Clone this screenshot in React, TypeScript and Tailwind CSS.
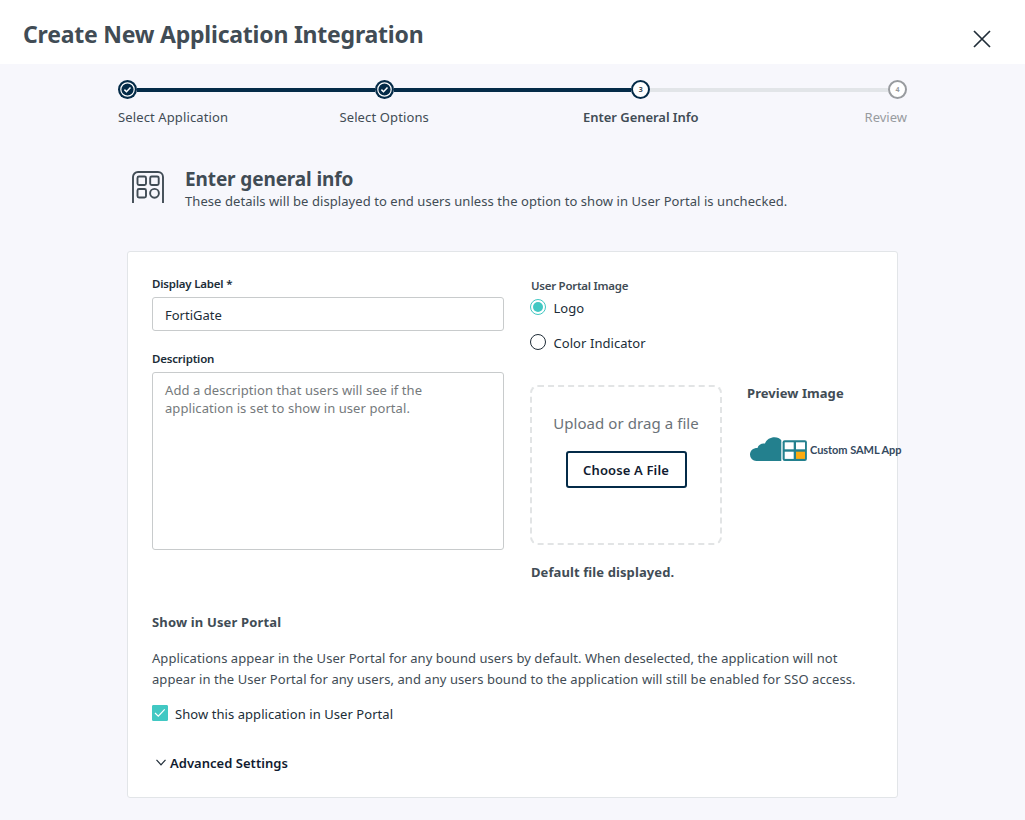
import { useState } from "react";

type StepState = "done" | "current" | "upcoming";

const steps: { label: string; state: StepState; align: string; text: string }[] = [
  {
    label: "Select Application",
    state: "done",
    align: "items-start",
    text: "tracking-[0.12px] text-[#414c55]",
  },
  {
    label: "Select Options",
    state: "done",
    align: "items-center",
    text: "tracking-[0.12px] text-[#414c55]",
  },
  {
    label: "Enter General Info",
    state: "current",
    align: "items-center",
    text: "font-semibold tracking-[-0.05px] text-[#414c55]",
  },
  { label: "Review", state: "upcoming", align: "items-end", text: "text-[#989b9f]" },
];

function StepCircle({ state, number }: { state: StepState; number: number }) {
  if (state === "done") {
    return (
      <svg width="19" height="19" viewBox="0 0 19 19" fill="none" className="shrink-0">
        <circle cx="9.5" cy="9.5" r="9.5" fill="#042b48" />
        <circle cx="9.5" cy="9.5" r="6.7" stroke="#fff" strokeWidth="1.2" />
        <path d="M6.4 9.6l2.1 2.1 4-4.3" stroke="#fff" strokeWidth="1.5" />
      </svg>
    );
  }
  return (
    <span
      className={`flex h-[19px] w-[19px] shrink-0 items-center justify-center rounded-full border-2 bg-white text-[7px] leading-none font-bold ${
        state === "current"
          ? "border-[#042b48] text-[#414c55]"
          : "border-[#989b9f] text-[#989b9f]"
      }`}
    >
      {number}
    </span>
  );
}

function Stepper() {
  return (
    <div className="ml-[118px] flex w-[789px] pt-4">
      {steps.map((step, index) => (
        <div key={step.label} className={index > 0 ? "flex flex-1" : "flex"}>
          {index > 0 && (
            <div
              className={`mt-2 h-1 flex-1 ${
                step.state === "upcoming" ? "bg-[#e2e5e8]" : "bg-[#042b48]"
              }`}
            />
          )}
          <div className={`flex w-[19px] flex-col ${step.align}`}>
            <StepCircle state={step.state} number={index + 1} />
            <span className={`mt-2 text-[13px] leading-5 whitespace-nowrap ${step.text}`}>
              {step.label}
            </span>
          </div>
        </div>
      ))}
    </div>
  );
}

function AppsIcon() {
  return (
    <svg
      width="34"
      height="34"
      viewBox="0 0 34 34"
      fill="none"
      stroke="#414c55"
      strokeWidth="1.9"
      className="shrink-0"
    >
      <path d="M2 32V6A5 5 0 0 1 7 1h20A5 5 0 0 1 32 6V32" />
      <rect x="6.5" y="5.5" width="8.5" height="8.5" rx="1.5" />
      <rect x="19.2" y="5.5" width="8.5" height="8.5" rx="1.5" />
      <rect x="6.5" y="18" width="8.5" height="8.5" rx="1.5" />
      <circle cx="23.5" cy="22.3" r="4.4" />
    </svg>
  );
}

function PreviewLogo() {
  return (
    <div className="flex w-40 items-center">
      <svg width="58" height="26" viewBox="0 0 58 26" className="shrink-0">
        <path
          d="M31.300 25H6.500A6.300 6.300 0 0 1 0 18.700C0 14.700 3 12 7.500 12C8.500 8.500 11.500 7 15 7.500C16.500 3.500 20.500 1.300 24.500 1.300C27.500 1.300 29.800 2.500 31.300 4.200Z"
          fill="#23808e"
        />
        <rect x="32.600" y="4.200" width="24.300" height="20.800" rx="2" fill="#23808e" />
        <rect x="34.700" y="6.300" width="9" height="7" fill="#fff" />
        <rect x="46" y="6.300" width="9" height="7" fill="#fff" />
        <rect x="34.700" y="15.700" width="9" height="7.200" fill="#fff" />
        <rect x="46" y="15.700" width="9" height="7.200" fill="#fbab10" />
      </svg>
      <span className="mt-px ml-[2px] font-[Lato] text-[11px] leading-4 font-bold tracking-[-0.05px] whitespace-nowrap text-[#34495e]">
        Custom SAML App
      </span>
    </div>
  );
}

function Radio({
  label,
  checked,
  onChange,
}: {
  label: string;
  checked: boolean;
  onChange: () => void;
}) {
  return (
    <button
      type="button"
      role="radio"
      aria-checked={checked}
      onClick={onChange}
      className="flex h-[18px] items-start"
    >
      <span
        className={`flex h-4 w-4 items-center justify-center rounded-full border ${
          checked ? "border-[#41c8c3]" : "border-[#202d38]"
        }`}
      >
        {checked && <span className="h-2.5 w-2.5 rounded-full bg-[#41c8c3]" />}
      </span>
      <span className="ml-[7.5px] text-[13px] leading-[18px] tracking-[0.06px] text-[#202d38]">
        {label}
      </span>
    </button>
  );
}

function App() {
  const [label, setLabel] = useState<string>("FortiGate");
  const [description, setDescription] = useState<string>("");
  const [image, setImage] = useState<"logo" | "color">("logo");
  const [visible, setVisible] = useState<boolean>(true);

  return (
    <div className="h-[820px] w-[1025px] overflow-hidden bg-[#f7f7fc] font-['Noto_Sans',sans-serif] text-[#414c55]">
      <header className="flex h-16 items-start justify-between bg-white pr-[34px] pl-[23px]">
        <h1 className="mt-[18px] text-[23px] leading-8 font-bold tracking-[-0.22px]">
          Create New Application Integration
        </h1>
        <button type="button" aria-label="Close" className="mt-[30px]">
          <svg width="18" height="18" viewBox="0 0 18 18" stroke="#202d38" strokeWidth="1.7">
            <path d="M1 1l16 16M17 1L1 17" />
          </svg>
        </button>
      </header>

      <Stepper />

      <div className="mt-11 ml-[131px] flex">
        <AppsIcon />
        <div className="ml-5">
          <h2 className="-mt-1 text-[19px] leading-6 font-bold tracking-[-0.12px]">
            Enter general info
          </h2>
          <p className="text-[13px] leading-5 tracking-[0.065px]">
            These details will be displayed to end users unless the option to show in User Portal is
            unchecked.
          </p>
        </div>
      </div>

      <main className="mt-10 ml-[127px] h-[547px] w-[771px] rounded-[3px] border border-[#e2e5e8] bg-white px-6">
        <div className="flex">
          <div className="w-[352px] shrink-0 pt-[23px]">
            <label className="block text-[11.5px] leading-[18px] font-semibold tracking-[-0.2px] text-[#202d38]">
              Display Label *
            </label>
            <input
              value={label}
              onChange={(e) => setLabel(e.target.value)}
              className="mt-1 block h-[34px] w-full rounded-[3px] border border-[#c8cbcc] px-3 pt-0.5 text-[13px] text-[#202d38] outline-none"
            />
            <label className="mt-[19px] block text-[11.5px] leading-[18px] font-semibold tracking-[-0.2px] text-[#202d38]">
              Description
            </label>
            <textarea
              value={description}
              onChange={(e) => setDescription(e.target.value)}
              placeholder="Add a description that users will see if the application is set to show in user portal."
              className="mt-1 block h-[178px] w-full resize-none rounded-[3px] border border-[#c8cbcc] py-2 pr-16 pl-3 text-[13px] leading-[18px] tracking-[0.07px] outline-none placeholder:text-[#757a7c]"
            />
          </div>

          <div className="ml-[26px] shrink-0 pt-[25px]">
            <p className="ml-px text-[11.5px] leading-[18px] font-semibold tracking-[-0.27px]">
              User Portal Image
            </p>
            <div className="mt-1 flex flex-col gap-[17px]">
              <Radio label="Logo" checked={image === "logo"} onChange={() => setImage("logo")} />
              <Radio
                label="Color Indicator"
                checked={image === "color"}
                onChange={() => setImage("color")}
              />
            </div>
            <div className="mt-[33px] flex">
              <div className="flex h-40 w-48 flex-col items-center rounded-lg border-2 border-dashed border-[#e2e4e5] pt-[25px]">
                <span className="text-[15px] leading-[22px] tracking-[0.07px] text-[#6b7278]">
                  Upload or drag a file
                </span>
                <button
                  type="button"
                  className="mt-[17px] h-[37px] w-[121px] rounded-[3px] border-2 border-[#042b48] pt-0.5 text-[13px] font-semibold tracking-[0.14px] text-[#111b30]"
                >
                  Choose A File
                </button>
              </div>
              <div className="ml-[25px] w-[127px]">
                <p className="-mt-px text-[13px] leading-[18px] font-bold tracking-[0.06px]">
                  Preview Image
                </p>
                <div className="mt-[34px] ml-[3px]">
                  <PreviewLogo />
                </div>
              </div>
            </div>
            <p className="mt-[18px] ml-px text-[13px] leading-[18px] font-bold tracking-[0.1px]">
              Default file displayed.
            </p>
          </div>
        </div>

        <h3 className="mt-8 text-[13px] leading-[18px] font-bold tracking-[0.15px]">
          Show in User Portal
        </h3>
        <p className="mt-[17px] text-[13px] leading-[21px] tracking-[0.06px] whitespace-nowrap">
          Applications appear in the User Portal for any bound users by default. When deselected, the
          application will not
          <br />
          appear in the User Portal for any users, and any users bound to the application will still
          be enabled for SSO access.
        </p>
        <button
          type="button"
          role="checkbox"
          aria-checked={visible}
          onClick={() => setVisible(!visible)}
          className="mt-[15px] flex h-[18px] items-start"
        >
          <span
            className={`flex h-4 w-4 items-center justify-center rounded-[1px] border border-[#41c8c3] ${
              visible ? "bg-[#41c8c3]" : "bg-white"
            }`}
          >
            <svg width="12" height="10" viewBox="0 0 12 10" fill="none" stroke="#fff" strokeWidth="1.2">
              <path d="M1 5l3.3 3.2L10.700 1.300" />
            </svg>
          </span>
          <span className="ml-[7px] text-[13px] leading-[18px] tracking-[0.06px] text-[#202d38]">
            Show this application in User Portal
          </span>
        </button>
        <button
          type="button"
          className="mt-[31px] ml-1 flex items-center text-[13px] leading-[18px] font-semibold tracking-[0.03px] text-[#111b30]"
        >
          <svg
            width="10"
            height="7"
            viewBox="0 0 10 7"
            fill="none"
            stroke="#202d38"
            strokeWidth="1.2"
            className="mr-1 mb-0.5"
          >
            <path d="M.5 .8L5 5.8L9.5 .8" />
          </svg>
          Advanced Settings
        </button>
      </main>
    </div>
  );
}

export default App;
